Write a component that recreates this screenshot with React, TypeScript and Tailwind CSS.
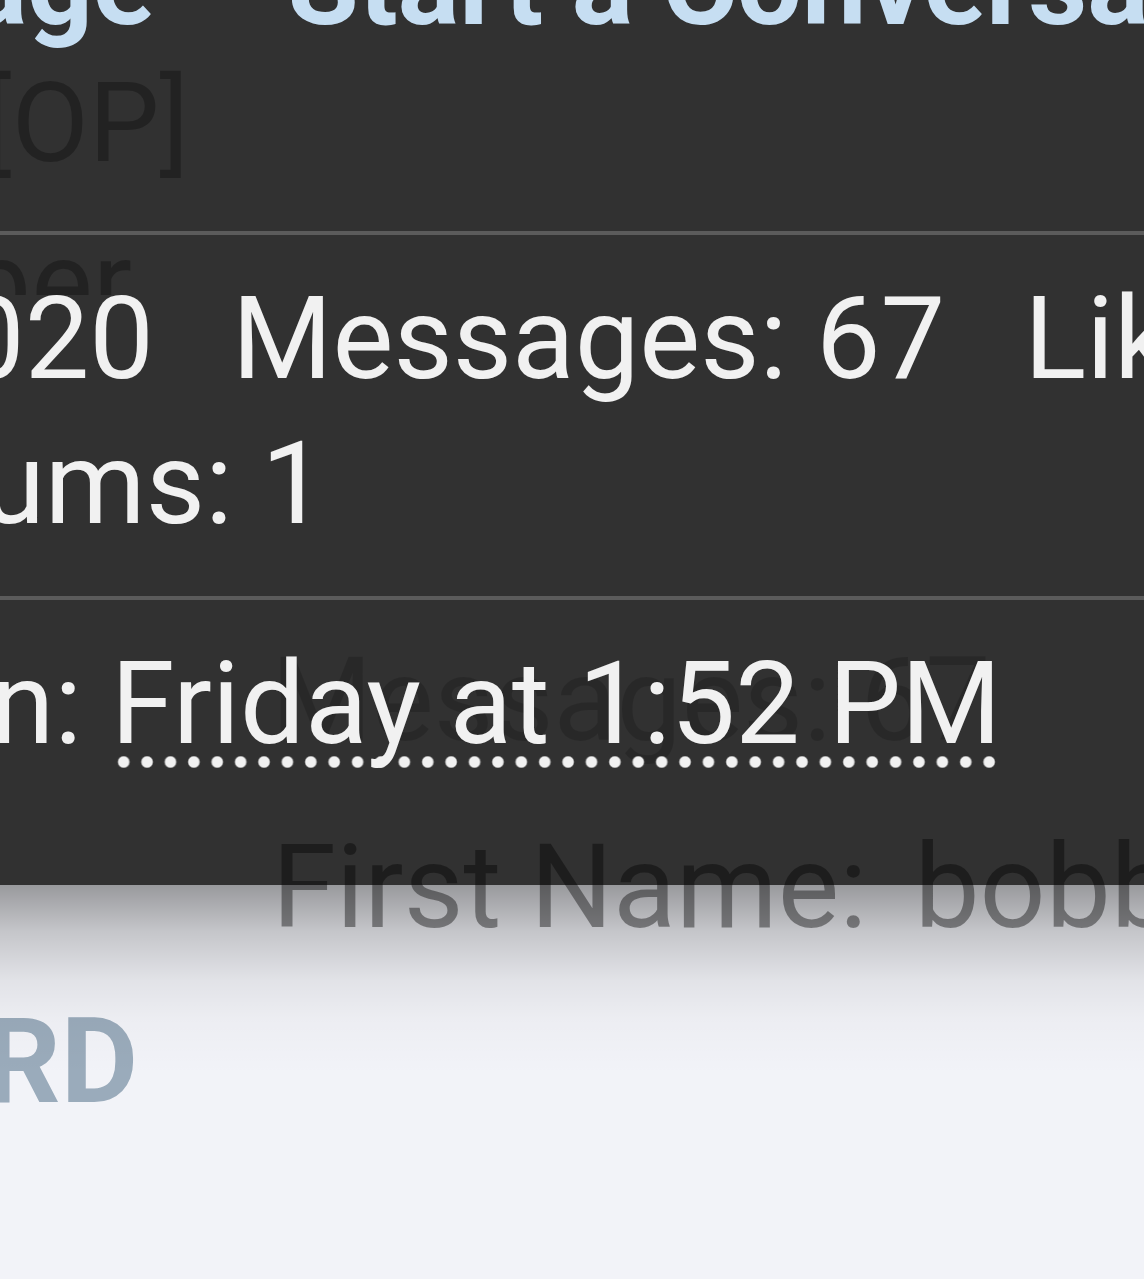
import React from "react";

export default function App() {
  return (
    <div className="relative w-[1144px] h-[1279px] overflow-hidden bg-[#f2f3f8] font-['Roboto','Liberation_Sans',sans-serif]">
      {/* page underneath */}
      <div className="pt-[989px]">
        <div className="flex w-[138px] justify-end whitespace-nowrap text-[119px] leading-[145px] font-bold text-[#9aabbb]">
          DASHBOARD
        </div>
      </div>

      {/* tooltip shadow */}
      <div className="absolute left-0 top-[885px] w-full h-[190px] bg-[linear-gradient(to_bottom,rgba(0,0,0,0.37)_0px,rgba(0,0,0,0.19)_46px,rgba(0,0,0,0.065)_96px,rgba(0,0,0,0.025)_135px,transparent_190px)]" />

      {/* member tooltip */}
      <div className="absolute left-0 top-0 w-full h-[885px] bg-[#313131] text-[#f1f1f1] text-[115px] leading-[145px] whitespace-nowrap">
        {/* ghost text from the page beneath */}
        <div className="absolute left-[-18px] top-[57px] text-[112px] leading-[131px] text-black/30">[OP]</div>
        <div className="absolute left-0 top-[245px] h-[50px] w-[140px] overflow-hidden">
          <div className="flex w-[132px] justify-end mt-[-30px] text-[116px] leading-[136px] text-black/30">Member</div>
        </div>
        <div className="absolute left-[271px] top-[632px] text-[116px] leading-[136px] text-black/[0.17]">Messages: 67</div>
        <div className="absolute left-[272px] top-[819px] flex text-[116px] leading-[136px] text-black/40">
          <span>First Name:</span>
          <span className="ml-[47px]">bobby</span>
        </div>

        <div className="relative">
          {/* actions */}
          <div className="flex mt-[-88px] font-bold text-[#c6def2]">
            <span className="flex w-[155px] justify-end">Profile page</span>
            <span className="ml-[133px]">Start a Conversation</span>
          </div>
          <div className="mt-[174px] h-[4px] bg-[#5b5b5b]" />

          {/* stats */}
          <div className="pt-[31px]">
            <div className="flex">
              <span className="flex w-[154px] justify-end">Joined: Mar 4, 2020</span>
              <span className="ml-[78px]">Messages: 67</span>
              <span className="ml-[79px]">Likes: 12</span>
            </div>
            <div className="flex">
              <span className="flex w-[326px] justify-end">Albums: 1</span>
            </div>
          </div>
          <div className="mt-[40px] h-[4px] bg-[#5b5b5b]" />

          {/* last seen */}
          <div className="pt-[31px] flex">
            <span className="flex w-[82px] justify-end">Last seen:</span>
            <span className="ml-[29px] bg-[radial-gradient(circle,#f1f1f1_5px,transparent_6.5px)] bg-[length:23.4px_14px] bg-repeat-x bg-[position:left_1px_bottom_7px]">
              Friday at 1:52 PM
            </span>
          </div>
        </div>
      </div>
    </div>
  );
}
